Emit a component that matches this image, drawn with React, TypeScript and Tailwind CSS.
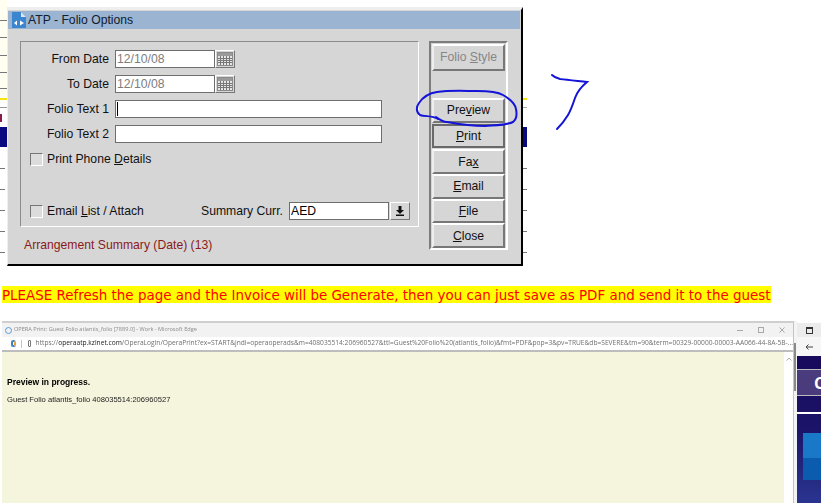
import React from "react";

const sans = "font-['Liberation_Sans',Arial,sans-serif]";

const leftMarks = [
  { top: 20, h: 1, w: 7, c: "#777" },
  { top: 37, h: 1, w: 7, c: "#777" },
  { top: 55, h: 1, w: 7, c: "#777" },
  { top: 72, h: 1, w: 7, c: "#777" },
  { top: 88, h: 1, w: 7, c: "#777" },
  { top: 98, h: 2, w: 7, c: "#f5e50a" },
  { top: 107, h: 1, w: 7, c: "#999" },
  { top: 114, h: 8, w: 2, c: "#8b1a4a" },
  { top: 127, h: 20, w: 7, c: "#0a0a80" },
  { top: 168, h: 1, w: 5, c: "#777" },
  { top: 189, h: 1, w: 5, c: "#777" },
  { top: 210, h: 1, w: 5, c: "#777" },
  { top: 231, h: 1, w: 5, c: "#777" },
  { top: 252, h: 1, w: 5, c: "#777" },
];

const rightMarks = [
  { top: 98, h: 2, w: 4, c: "#f5e50a" },
  { top: 107, h: 1, w: 4, c: "#aaa" },
  { top: 127, h: 20, w: 4, c: "#0a0a80" },
  { top: 168, h: 1, w: 4, c: "#777" },
  { top: 189, h: 1, w: 4, c: "#777" },
  { top: 210, h: 1, w: 4, c: "#777" },
  { top: 231, h: 1, w: 4, c: "#777" },
  { top: 252, h: 1, w: 4, c: "#777" },
];

type Mark = { top: number; h: number; w: number; c: string };

function Marks({ items }: { items: Mark[] }) {
  return (
    <>
      {items.map((m, i) => (
        <div
          key={i}
          className="absolute left-0"
          style={{ top: m.top, height: m.h, width: m.w, background: m.c }}
        />
      ))}
    </>
  );
}

function Calendar() {
  return (
    <div className="w-[20px] h-[18px] bg-[#d6d6d6] border-t border-l border-white border-r border-b border-r-[#777] border-b-[#777] flex items-center justify-center shrink-0">
      <svg width="16" height="14" viewBox="0 0 16 14">
        <rect x="0.5" y="0.5" width="15" height="13" fill="#e6e6e6" stroke="#8a8a8a" />
        <rect x="1" y="1" width="14" height="3" fill="#9a9a9a" />
        <path
          d="M1 6.5H15M1 8.5H15M1 10.5H15M3.5 4V13M6.5 4V13M9.5 4V13M12.5 4V13"
          stroke="#777"
          strokeWidth="1"
        />
      </svg>
    </div>
  );
}

function Field({ value, w, cursor, grey }: { value?: string; w: string; cursor?: boolean; grey?: boolean }) {
  return (
    <div
      className={`${w} h-[18px] bg-white border border-[#6e6e6e] flex items-center pl-[1px] text-[12.2px] leading-none ${
        grey ? "text-[#7d7d7d]" : "text-black"
      }`}
    >
      {cursor && <div className="w-[1px] h-[14px] bg-black" />}
      {value}
    </div>
  );
}

function Row({ label, children }: { label: string; children: React.ReactNode }) {
  return (
    <div className="flex items-center h-[18px]">
      <div className="w-[82px] text-right text-[12.2px] leading-none text-[#111] mr-[6px]">{label}</div>
      {children}
    </div>
  );
}

function Check({ children }: { children: React.ReactNode }) {
  return (
    <div className="flex items-center gap-[4px]">
      <div className="w-[13px] h-[13px] bg-[#dcdcdc] border border-t-[#777] border-l-[#777] border-r-white border-b-white" />
      <span className="text-[12.2px] leading-none text-[#111]">{children}</span>
    </div>
  );
}

function Btn({
  children,
  h,
  dark,
  disabled,
}: {
  children: React.ReactNode;
  h: string;
  dark?: boolean;
  disabled?: boolean;
}) {
  return (
    <div
      className={`${h} w-[73px] bg-[#d6d6d6] flex items-center justify-center text-[12.2px] leading-none border-2 ${
        dark
          ? "border-[#6a6a6a]"
          : "border-t-white border-l-[#eeeeee] border-r-[#777] border-b-[#777]"
      } ${disabled ? "text-[#868686]" : "text-[#111]"}`}
    >
      <span>{children}</span>
    </div>
  );
}

function Dialog() {
  return (
    <div className={`w-[516px] h-[259px] bg-[#d6d6d6] border-t-[3px] border-[#eeeeee] border-l border-r-2 border-r-black border-b-2 border-b-black flex flex-col ${sans}`}>
      <div className="h-[18px] mt-[1px] mr-[1px] bg-[#9ab4d2] flex items-center pl-[4px] gap-[2px]">
        <svg width="14" height="16" viewBox="0 0 14 16">
          <path d="M0 0H9L14 5V16H0Z" fill="#3b86cf" />
          <path d="M9 0V5H14Z" fill="#d8e8f6" />
          <path d="M2 11L5 8.5V13.5ZM12 11L8 8.5V13.5Z" fill="#ffffff" />
        </svg>
        <span className="pt-[1px] text-[12.2px] leading-none text-[#10202f]">ATP - Folio Options</span>
      </div>

      <div className="flex pl-[12px] pt-[12px] gap-[10px]">
        <div className="w-[399px] h-[186px] border border-t-[#8c8c8c] border-l-[#8c8c8c] border-r-white border-b-white pl-[6px] pt-[8px] flex flex-col">
          <div className="flex flex-col gap-[7px]">
            <Row label="From Date">
              <Field value="12/10/08" w="w-[100px]" grey />
              <Calendar />
            </Row>
            <Row label="To Date">
              <Field value="12/10/08" w="w-[100px]" grey />
              <Calendar />
            </Row>
            <Row label="Folio Text 1">
              <Field w="w-[267px]" cursor />
            </Row>
            <Row label="Folio Text 2">
              <Field w="w-[267px]" />
            </Row>
          </div>
          <div className="mt-[10px] ml-[3px]">
            <Check>
              Print Phone <u>D</u>etails
            </Check>
          </div>
          <div className="mt-[36px] ml-[3px] flex items-center">
            <div className="w-[171px]">
              <Check>
                Email <u>L</u>ist / Attach
              </Check>
            </div>
            <span className="text-[12.2px] leading-none text-[#111] w-[88px]">Summary Curr.</span>
            <Field value="AED" w="w-[100px]" />
            <div className="ml-[1px] w-[20px] h-[18px] bg-[#d6d6d6] border border-t-white border-l-white border-r-[#777] border-b-[#777] flex items-center justify-center">
              <svg width="10" height="10" viewBox="0 0 10 10">
                <path d="M3.5 0H6.5V4H9L5 8L1 4H3.5ZM1 8.5H9V10H1Z" fill="#111" />
              </svg>
            </div>
          </div>
        </div>

        <div className="w-[79px] h-[209px] border-2 border-t-[#7d7d7d] border-l-[#7d7d7d] border-r-white border-b-white pl-[1px] pt-[1px] flex flex-col">
          <Btn h="h-[27px]" disabled>
            Folio <u>S</u>tyle
          </Btn>
          <div className="h-[28px]" />
          <Btn h="h-[25px]">
            Pre<u>v</u>iew
          </Btn>
          <div className="h-[1px]" />
          <Btn h="h-[25px]" dark>
            <u>P</u>rint
          </Btn>
          <div className="h-[1px]" />
          <Btn h="h-[25px]">
            Fa<u>x</u>
          </Btn>
          <Btn h="h-[25px]">
            <u>E</u>mail
          </Btn>
          <Btn h="h-[25px]">
            <u>F</u>ile
          </Btn>
          <Btn h="h-[25px]">
            <u>C</u>lose
          </Btn>
        </div>
      </div>

      <div className="-mt-[11px] ml-[16px] text-[12.2px] leading-none text-[#8a1a1a]">Arrangement Summary (Date) (13)</div>
    </div>
  );
}

function Browser() {
  return (
    <div className="flex h-[182px] pl-[2px]">
      <div className="w-[792px] flex flex-col border-t-2 border-[#cfcfcf] border-r border-r-[#c4c4c4] font-['Open_Sans',sans-serif]">
        <div className="h-[14px] bg-[#f2f2f2] flex items-center pl-[3px] gap-[2px] text-[#8a8a8a]">
          <div className="w-[7px] h-[7px] rounded-full border border-[#5b9bd5]" />
          <span className="text-[5.6px] leading-none flex-1 whitespace-nowrap blur-[0.3px]">
            OPERA Print: Guest Folio atlantis_folio [7889.0] - Work - Microsoft Edge
          </span>
          <div className="flex items-center gap-[15px] pr-[8px]">
            <div className="w-[6px] h-[1px] bg-[#a8a8a8]" />
            <div className="w-[6px] h-[6px] border border-[#a8a8a8]" />
            <svg width="6" height="6" viewBox="0 0 6 6">
              <path d="M0.5 0.5L5.5 5.5M5.5 0.5L0.5 5.5" stroke="#a8a8a8" />
            </svg>
          </div>
        </div>
        <div className="h-[15px] bg-white border-b-2 border-[#bdbdbd] flex items-center pl-[9px]">
          <div className="w-[7px] h-[7px] rounded-full border-2 border-[#3f7fc4] border-r-[#e8a33a]" />
          <div className="ml-[5px] w-[1px] h-[8px] bg-[#c4c4c4]" />
          <div className="ml-[7px] w-[6px] h-[7px] border border-[#777] rounded-[1px]" />
          <span className="ml-[5px] text-[6.65px] leading-none whitespace-nowrap text-[#6f6f6f] blur-[0.3px]">
            https://<span className="text-[#222]">operaatp.kzlnet.com</span>
            /OperaLogin/OperaPrint?ex=START&amp;jndi=operaoperads&amp;m=408035514:206960527&amp;ttl=Guest%20Folio%20(atlantis_folio)&amp;fmt=PDF&amp;pop=3&amp;pv=TRUE&amp;db=SEVERE&amp;tm=90&amp;term=00329-00000-00003-AA066-44-8A-5B-...
          </span>
        </div>
        <div className="flex-1 flex">
          <div className={`flex-1 bg-[#f5f4dc] pl-[5px] pt-[25px] text-black ${sans}`}>
            <div className="text-[8.5px] font-bold leading-[10px] blur-[0.2px]">Preview in progress.</div>
            <div className="mt-[8px] text-[7.6px] leading-[10px] text-[#222] blur-[0.2px]">Guest Folio atlantis_folio 408035514:206960527</div>
          </div>
          <div className="w-[9px] bg-white flex justify-center pt-[5px]">
            <svg width="6" height="4" viewBox="0 0 6 4">
              <path d="M0.5 3.5L3 1L5.5 3.5" stroke="#aaa" fill="none" />
            </svg>
          </div>
        </div>
      </div>
      <div className="w-[3px] bg-[#f4f4f4] flex flex-col">
        <div className="h-[22px]" />
        <div className="h-[48px] w-[2px] bg-[#8a8a8a]" />
      </div>
      <div className="w-[24px] flex flex-col">
        <div className="h-[14px] bg-[#ececec] flex items-center justify-center mt-[2px]">
          <div className="w-[7px] h-[7px] border border-[#333] border-t-2" />
        </div>
        <div className="h-[19px] bg-[#f6f6f6] flex items-center justify-center">
          <svg width="8" height="6" viewBox="0 0 8 6">
            <path d="M8 3H1M3.5 0.5L1 3L3.5 5.5" stroke="#444" fill="none" />
          </svg>
        </div>
        <div className="flex-1 bg-gradient-to-b from-[#17095c] via-[#1b1468] to-[#2a3590] flex flex-col">
          <div className="h-[14px] border-b border-[#bbb]" />
          <div className="h-[26px] bg-[#4a3b7c] border-b border-[#bbb] flex items-center pl-[17px] overflow-hidden text-white font-bold text-[16px] leading-none">
            <span className="font-['Open_Sans',sans-serif]">C</span>
          </div>
          <div className="h-[18px] border-b-2 border-white" />
          <div className="mt-[19px] ml-[6px] h-[47px] flex flex-col">
            <div className="h-[25px] bg-[#1a78c8]" />
            <div className="h-[22px] bg-[#0b5bae]" />
          </div>
        </div>
      </div>
    </div>
  );
}

export default function App() {
  return (
    <div className="relative w-[830px] h-[503px] overflow-hidden bg-white">
      <div className="h-[286px] w-[527px] flex pt-[7px] relative">
        <div className="absolute left-0 top-0 w-[7px] h-[100px] bg-[#fffef0]" />
        <div className="absolute left-0 top-0 w-[7px] h-[265px]">
          <Marks items={leftMarks} />
        </div>
        <div className="absolute left-[523px] top-0 w-[4px] h-[265px]">
          <Marks items={rightMarks} />
        </div>
        <div className="w-[7px] shrink-0" />
        <Dialog />
      </div>

      <div className="pl-[2px] h-[35px]">
        <div className="w-fit h-[17px] bg-[#ffff00] text-[#ff0000] text-[13.45px] leading-[19px] whitespace-nowrap font-['DejaVu_Sans',Verdana,sans-serif]">
          PLEASE Refresh the page and the Invoice will be Generate, then you can just save as PDF and send it to the guest
        </div>
      </div>

      <Browser />

      {/* pen annotations on top of the screenshot */}
      <svg className="absolute left-0 top-0 pointer-events-none" width="830" height="503" viewBox="0 0 830 503">
        <path
          d="M438 119C432 115 425 117 420 115C416 112 416 107 419 103C423 97 430 93 437 92C450 90 465 91 477 91C487 91 498 92 503 95C510 99 515 103 516 109C517 114 517 119 513 122C507 125 498 125 485 126C472 126 458 124 447 122C444 122 440 120 436 117"
          fill="none"
          stroke="#1414d8"
          strokeWidth="2"
          strokeLinecap="round"
        />
        <path
          d="M552 75C554 77 556 78 560 79C568 80 578 81 587 82C581 87 577 92 575 98C573 104 571 110 568 115C565 120 561 125 557 129"
          fill="none"
          stroke="#1414d8"
          strokeWidth="2"
          strokeLinecap="round"
        />
      </svg>
    </div>
  );
}
